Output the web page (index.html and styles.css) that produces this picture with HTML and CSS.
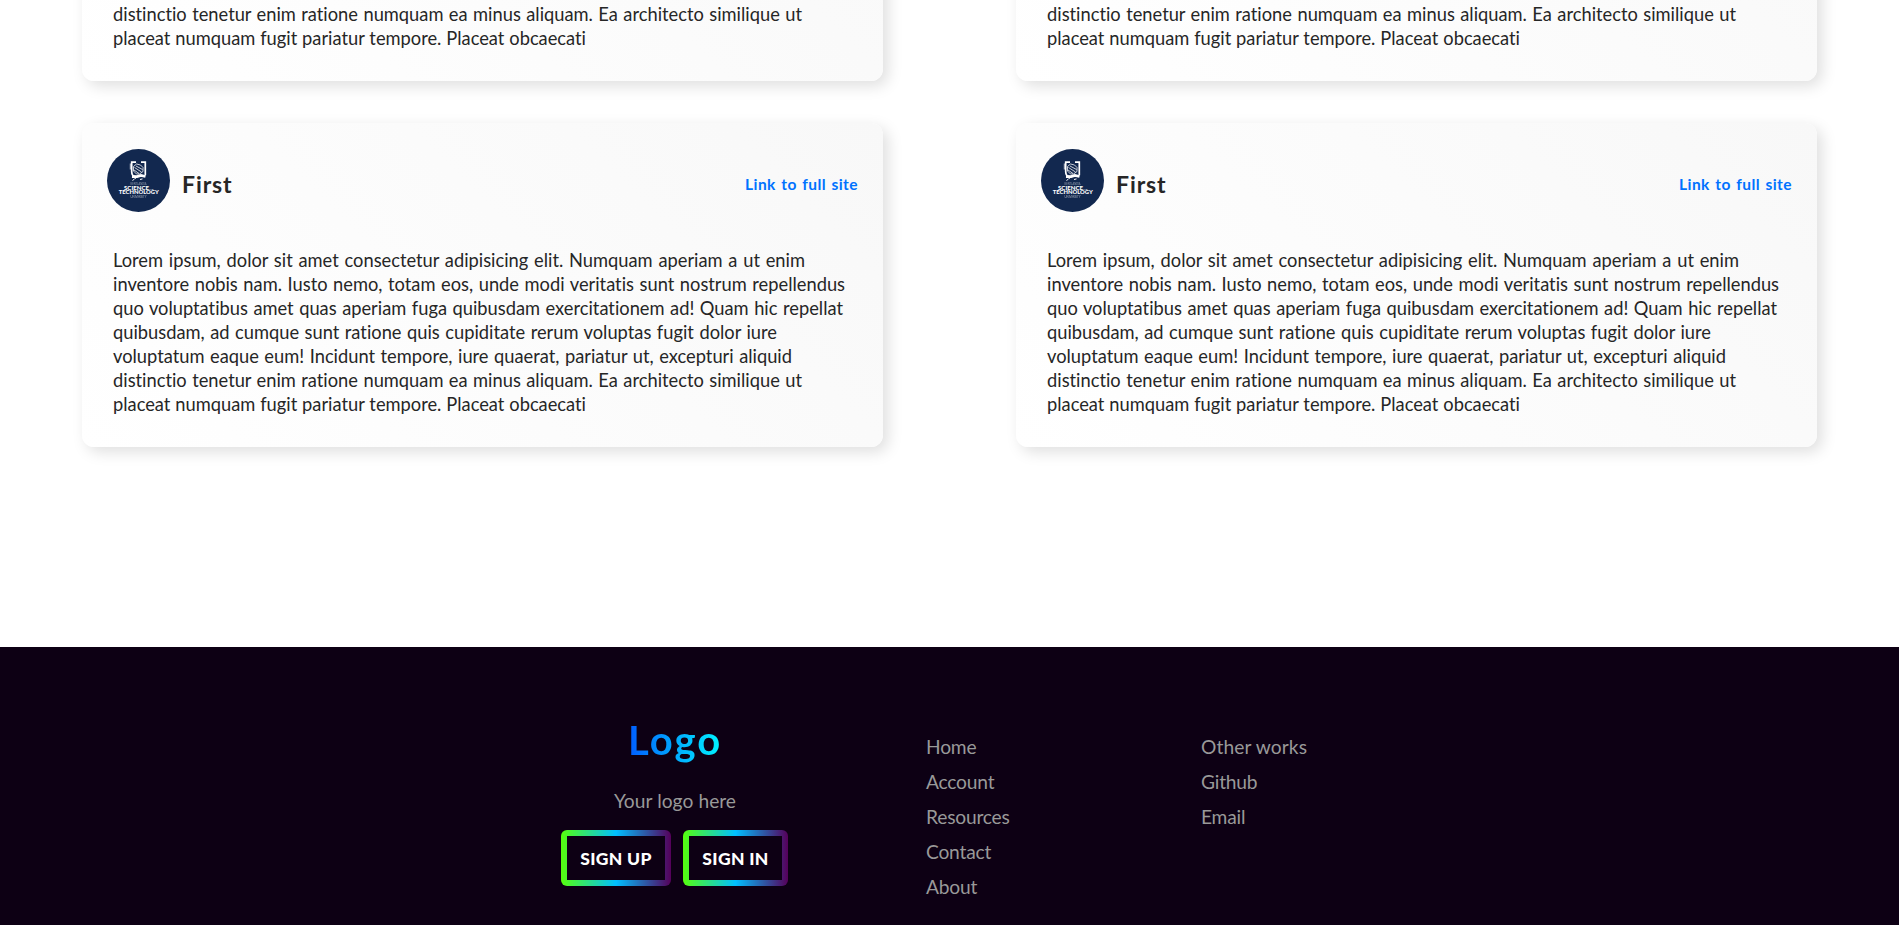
FILE: index.html
```html
<!DOCTYPE html>
<html lang="en">
<head>
<meta charset="utf-8">
<title>Projects</title>
<link rel="stylesheet" href="styles.css">
</head>
<body>
<main class="projects">
  <div class="grid">
    <article class="card">
      <header class="card-head"><svg class="avatar"><use href="#crest"/></svg><h2>First</h2><a class="site-link">Link to full site</a></header>
      <p class="card-text"><span class="l1">Lorem ipsum, dolor sit amet consectetur adipisicing elit. Numquam aperiam a ut enim</span><span class="l2">inventore nobis nam. Iusto nemo, totam eos, unde modi veritatis sunt nostrum repellendus</span><span class="l3">quo voluptatibus amet quas aperiam fuga quibusdam exercitationem ad! Quam hic repellat</span><span class="l4">quibusdam, ad cumque sunt ratione quis cupiditate rerum voluptas fugit dolor iure</span><span class="l5">voluptatum eaque eum! Incidunt tempore, iure quaerat, pariatur ut, excepturi aliquid</span><span class="l6">distinctio tenetur enim ratione numquam ea minus aliquam. Ea architecto similique ut</span><span class="l7">placeat numquam fugit pariatur tempore. Placeat obcaecati</span></p>
    </article>
    <article class="card">
      <header class="card-head"><svg class="avatar"><use href="#crest"/></svg><h2>First</h2><a class="site-link">Link to full site</a></header>
      <p class="card-text"><span class="l1">Lorem ipsum, dolor sit amet consectetur adipisicing elit. Numquam aperiam a ut enim</span><span class="l2">inventore nobis nam. Iusto nemo, totam eos, unde modi veritatis sunt nostrum repellendus</span><span class="l3">quo voluptatibus amet quas aperiam fuga quibusdam exercitationem ad! Quam hic repellat</span><span class="l4">quibusdam, ad cumque sunt ratione quis cupiditate rerum voluptas fugit dolor iure</span><span class="l5">voluptatum eaque eum! Incidunt tempore, iure quaerat, pariatur ut, excepturi aliquid</span><span class="l6">distinctio tenetur enim ratione numquam ea minus aliquam. Ea architecto similique ut</span><span class="l7">placeat numquam fugit pariatur tempore. Placeat obcaecati</span></p>
    </article>
    <article class="card">
      <header class="card-head">
        <svg class="avatar" viewBox="0 0 63 63">
          <g id="crest">
            <circle cx="31.5" cy="31.5" r="31.5" fill="#12284f"/>
            <g fill="none" stroke="#fff">
              <path d="M29 13.2h-4.300v9.500c0 3 2 5.200 4.300 6.500M34 13.200h4.300v13" stroke-width="1.700"/>
              <path d="M23.300 14.500v6M26.500 17.500l3-2.500 4 1 2.500 2.500v4l-3.500 2.500h-3l-3-3zM27.500 18.500l7 4.500M29 17l6.500 3.500M27 21l5 3.500" stroke-width=".9" opacity=".85"/>
              <path d="M25 27.500l5 .2 4-1.200 4.500 1" stroke-width="2.800"/>
              <path d="M25.500 31.500l2-1.500M33 30.500l2.500-.6" stroke-width="1"/>
            </g>
            <g fill="#fff" text-anchor="middle" font-family="Lato, sans-serif">
              <text x="31.500" y="35.800" font-size="3" textLength="16" lengthAdjust="spacingAndGlyphs" opacity=".5">KENTLANDIA</text>
              <text x="29.500" y="40.800" font-size="4.600" font-weight="900" textLength="25" lengthAdjust="spacingAndGlyphs">SCIENCE</text>
              <text x="44.300" y="40.600" font-size="2" textLength="4" lengthAdjust="spacingAndGlyphs">AND</text>
              <text x="31.800" y="45" font-size="4.800" font-weight="900" textLength="40" lengthAdjust="spacingAndGlyphs">TECHNOLOGY</text>
              <text x="31.500" y="49.300" font-size="4" textLength="16" lengthAdjust="spacingAndGlyphs" opacity=".55">UNIVERSITY</text>
            </g>
          </g>
        </svg>
        <h2>First</h2><a class="site-link">Link to full site</a>
      </header>
      <p class="card-text"><span class="l1">Lorem ipsum, dolor sit amet consectetur adipisicing elit. Numquam aperiam a ut enim</span><span class="l2">inventore nobis nam. Iusto nemo, totam eos, unde modi veritatis sunt nostrum repellendus</span><span class="l3">quo voluptatibus amet quas aperiam fuga quibusdam exercitationem ad! Quam hic repellat</span><span class="l4">quibusdam, ad cumque sunt ratione quis cupiditate rerum voluptas fugit dolor iure</span><span class="l5">voluptatum eaque eum! Incidunt tempore, iure quaerat, pariatur ut, excepturi aliquid</span><span class="l6">distinctio tenetur enim ratione numquam ea minus aliquam. Ea architecto similique ut</span><span class="l7">placeat numquam fugit pariatur tempore. Placeat obcaecati</span></p>
    </article>
    <article class="card">
      <header class="card-head"><svg class="avatar"><use href="#crest"/></svg><h2>First</h2><a class="site-link">Link to full site</a></header>
      <p class="card-text"><span class="l1">Lorem ipsum, dolor sit amet consectetur adipisicing elit. Numquam aperiam a ut enim</span><span class="l2">inventore nobis nam. Iusto nemo, totam eos, unde modi veritatis sunt nostrum repellendus</span><span class="l3">quo voluptatibus amet quas aperiam fuga quibusdam exercitationem ad! Quam hic repellat</span><span class="l4">quibusdam, ad cumque sunt ratione quis cupiditate rerum voluptas fugit dolor iure</span><span class="l5">voluptatum eaque eum! Incidunt tempore, iure quaerat, pariatur ut, excepturi aliquid</span><span class="l6">distinctio tenetur enim ratione numquam ea minus aliquam. Ea architecto similique ut</span><span class="l7">placeat numquam fugit pariatur tempore. Placeat obcaecati</span></p>
    </article>
  </div>
</main>

<footer class="footer">
  <section class="brand">
    <div class="logo">Logo</div>
    <p class="tagline">Your logo here</p>
    <div class="buttons">
      <button class="btn btn-up">SIGN UP</button>
      <button class="btn btn-in">SIGN IN</button>
    </div>
  </section>
  <ul class="links links-main">
    <li>Home</li><li>Account</li><li>Resources</li><li>Contact</li><li>About</li>
  </ul>
  <ul class="links">
    <li class="wide">Other works</li><li>Github</li><li>Email</li>
  </ul>
</footer>
</body>
</html>
```
FILE: styles.css
```css
* { box-sizing: border-box; }

body {
  margin: 0;
  height: 925px;
  overflow: hidden;
  background: #fff;
  font-family: "Gill Sans", "Gill Sans MT", Lato, sans-serif;
  font-variant-ligatures: none;
  color: #262626;
}

.projects {
  height: 647px;
  padding: 0 82px 200px;
  overflow: hidden;
  display: flex;
  flex-direction: column;
  justify-content: flex-end;
}

.grid {
  display: grid;
  grid-template-columns: 801px 801px;
  grid-auto-rows: 324px;
  justify-content: space-between;
  row-gap: 42px;
}

.card {
  padding: 26px 25px 0;
  border-radius: 12px;
  background: linear-gradient(45deg, #fff, #f8f8f8);
  box-shadow: 5px 5px 15px rgba(0, 0, 0, .13), -5px -5px 15px rgba(255, 255, 255, .5);
}

.card-head {
  display: flex;
  height: 63px;
}

.avatar { width: 63px; height: 63px; }

.card-head h2 {
  margin: 21px 0 0 12px;
  font-size: 23px;
  line-height: 28px;
  letter-spacing: .9px;
}

.site-link {
  margin: 25px 0 0 auto;
  width: 113px;
  font-size: 15.5px;
  line-height: 20px;
  font-weight: 700;
  letter-spacing: .45px;
  color: #0072ff;
  white-space: nowrap;
  text-align-last: justify;
}

.card-text {
  margin: 36px 0 0 6px;
  font-size: 18.3px;
  line-height: 24px;
}

.card-text span {
  display: block;
  white-space: nowrap;
  text-align-last: justify;
}

.l1 { width: 692px; }
.l2 { width: 732px; }
.l3 { width: 730px; }
.l4 { width: 664px; }
.l5 { width: 679px; }
.l6 { width: 689px; }
.l7 { width: 473px; }

.footer {
  height: 278px;
  padding-left: 561px;
  display: flex;
  background: #0d0014;
  color: #999;
  font-size: 19.2px;
}

.brand {
  width: 365px;
  padding-top: 68px;
}

.logo {
  width: 94px;
  margin-left: 67px;
  font-size: 40px;
  line-height: 50px;
  font-weight: 700;
  letter-spacing: 2px;
  background: linear-gradient(90deg, #005cff, #00f6ff);
  background-clip: text;
  -webkit-background-clip: text;
  color: transparent;
}

.tagline {
  width: 122px;
  margin: 23px 0 17px 53px;
  line-height: 25px;
  white-space: nowrap;
  text-align-last: justify;
}

.buttons { display: flex; gap: 12px; }

.btn {
  height: 56px;
  padding: 0;
  border: 6px solid transparent;
  border-radius: 6px;
  background:
    linear-gradient(#0d0014, #0d0014) padding-box,
    linear-gradient(90deg, #55ff0c, #00bfff 50%, #55005a) border-box;
  color: #fff;
  font: 900 17.5px "Gill Sans", "Gill Sans MT", Lato, sans-serif;
  letter-spacing: .3px;
}

.btn-up { width: 110px; }
.btn-in { width: 105px; }

.links {
  list-style: none;
  margin: 0;
  padding: 82px 0 0;
  line-height: 35px;
  letter-spacing: -.2px;
}

.links .wide { letter-spacing: .1px; }

.links-main { width: 275px; }
```
